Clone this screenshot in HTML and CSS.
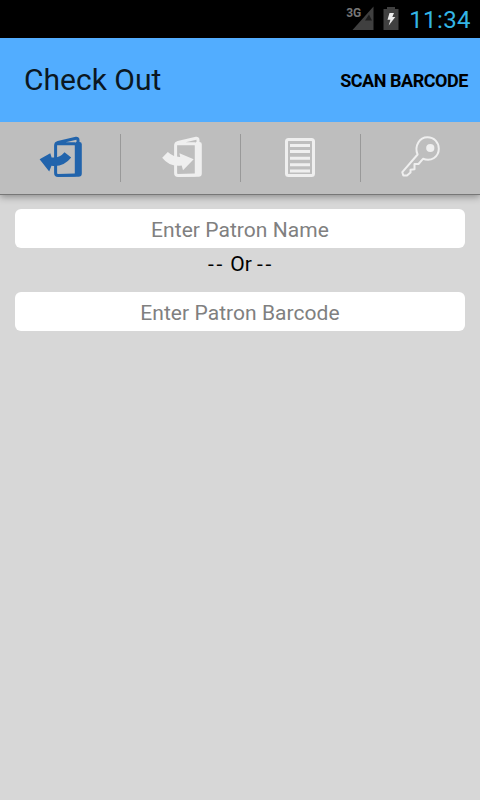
FILE: index.html
```html
<!DOCTYPE html>
<html lang="en">
<head>
    <meta charset="UTF-8">
    <meta name="viewport" content="width=device-width, initial-scale=1.0">
    <title>Check Out</title>
    <link rel="stylesheet" href="styles.css">
</head>
<body>
    <div class="status-bar">
        <span class="network">3G</span>
        <svg class="signal" width="22" height="24" viewBox="0 0 22 24">
            <path d="M0.5 24L21.5 0.5V24Z" fill="#404040"/>
            <path d="M13 14.5L17 8.5L20 14.5Z" fill="#1c1c1c"/>
        </svg>
        <svg class="battery" width="16" height="24" viewBox="0 0 16 24">
            <path d="M4 1H12V3H15.5V24H0.5V3H4Z" fill="#404040"/>
            <path d="M6.5 7H11L9.3 11H12.3L5.7 19.5L7.4 13.7H4.5Z" fill="#ececec"/>
        </svg>
        <span class="clock">11:34</span>
    </div>
    <header>
        <h1>Check Out</h1>
        <button class="scan">SCAN BARCODE</button>
    </header>
    <nav>
        <a class="tab active" href="#" aria-label="Check out">
            <svg width="48" height="48" viewBox="0 0 48 48">
                <path class="line" d="M20.5 9.8H38.5Q40.3 9.8 40.3 11.6V39.2Q40.3 41 38.5 41L22 41.4Q19.6 41.4 19.6 39V11.5Q19.6 9.2 22 8.5L40 4.2Q42 4 42 6V9"/>
                <path class="fill" d="M40 8H43.5Q45.8 8 45.8 10.3V39.5Q45.8 42.7 42.5 42.7H22L24 40.5H40Z"/>
                <path class="fill" d="M3.6 25.2L14.3 19.2L15.6 23.4Q23.2 24.6 28.5 18.2L35.2 23.4Q27.5 33.2 15.5 31.7L13.2 37.5Z"/>
            </svg>
        </a>
        <a class="tab" href="#" aria-label="Check in">
            <svg width="48" height="48" viewBox="0 0 48 48">
                <path class="line" d="M20.5 9.8H38.5Q40.3 9.8 40.3 11.6V39.2Q40.3 41 38.5 41L22 41.4Q19.6 41.4 19.6 39V11.5Q19.6 9.2 22 8.5L40 4.2Q42 4 42 6V9"/>
                <path class="fill" d="M40 8H43.5Q45.8 8 45.8 10.3V39.5Q45.8 42.7 42.5 42.7H22L24 40.5H40Z"/>
                <path class="fill" d="M6.2 23.7L11.8 18.1Q17.5 23.2 24.2 23L23.4 19.3L37.7 25.3L27 36.2L25.7 31.5Q13.5 33.2 6.2 23.7Z"/>
            </svg>
        </a>
        <a class="tab" href="#" aria-label="List">
            <svg width="48" height="48" viewBox="0 0 48 48">
                <rect class="line" x="10.5" y="5.5" width="27" height="36" rx="2"/>
                <path class="rows" d="M14 11.5H34M14 17.5H34M14 24.3H34M14 30.7H34M14 37H34"/>
            </svg>
        </a>
        <a class="tab" href="#" aria-label="Key">
            <svg width="48" height="48" viewBox="0 0 48 48">
                <path class="key" d="M21.6 20.5C18 12 23.5 3.2 31.5 3.2C38.2 3.2 42.8 8.4 42.8 14.8C42.8 22.5 35.4 28.2 27 24.8L22.5 30H18.5V35.2L14.5 35.7V38.5L11 41.5H7.3L6.3 38.2Z"/>
                <circle class="fill" cx="34.3" cy="14" r="4.1"/>
            </svg>
        </a>
    </nav>
    <main>
        <input type="text" placeholder="Enter Patron Name">
        <p><span class="dash">--</span> Or <span class="dash">--</span></p>
        <input type="text" placeholder="Enter Patron Barcode">
    </main>
</body>
</html>
```
FILE: styles.css
```css
* {
    box-sizing: border-box;
}

body {
    margin: 0;
    height: 100vh;
    overflow: hidden;
    display: flex;
    flex-direction: column;
    font-family: Roboto, sans-serif;
    background-color: #d7d7d7;
}

.status-bar {
    height: 38px;
    background-color: #000;
    display: flex;
    justify-content: flex-end;
    align-items: flex-start;
    padding: 6px 9px 0 0;
}

.network {
    color: #777;
    font-size: 12px;
    font-weight: bold;
    line-height: 14px;
    margin-right: -9px;
}

.battery {
    margin: 0 10px 0 9px;
}

.clock {
    color: #33b5e5;
    font-size: 24px;
    line-height: 28px;
    letter-spacing: 0.4px;
}

header {
    height: 84px;
    background-color: #52adff;
    display: flex;
    justify-content: space-between;
    align-items: center;
    padding: 0 12px 0 24px;
}

h1 {
    margin: 0;
    padding-bottom: 2px;
    font-size: 30px;
    font-weight: normal;
    color: #0b1722;
}

.scan {
    border: none;
    padding: 0;
    background: none;
    color: #000;
    font-family: inherit;
    font-size: 18px;
    font-weight: bold;
    letter-spacing: -0.45px;
}

nav {
    height: 73px;
    flex-shrink: 0;
    display: flex;
    align-items: center;
    background-color: #bebebe;
    border-bottom: 1px solid #777;
    box-shadow: 0 2px 7px rgba(0, 0, 0, 0.35);
    clip-path: inset(0 0 -12px 0);
}

.tab {
    flex: 1;
    height: 48px;
    display: flex;
    justify-content: center;
    color: #efefef;
}

.tab + .tab {
    box-shadow: inset 1px 0 #999;
}

.tab.active {
    color: #2264ac;
}

.line {
    fill: none;
    stroke: currentColor;
    stroke-width: 3;
}

.rows {
    stroke: currentColor;
    stroke-width: 3;
}

.key {
    fill: none;
    stroke: currentColor;
    stroke-width: 2;
    stroke-linejoin: round;
}

.fill {
    fill: currentColor;
}

main {
    padding: 14px 15px;
}

input {
    display: block;
    width: 100%;
    height: 39px;
    border: none;
    border-radius: 6px;
    padding: 3px 0 0;
    background-color: #fff;
    font-family: inherit;
    font-size: 21px;
    text-align: center;
    letter-spacing: 0.05px;
}

input::placeholder {
    color: #808080;
}

p {
    margin: 0;
    height: 44px;
    padding: 2px 0 0 2px;
    font-size: 21px;
    line-height: 28px;
    text-align: center;
    color: #000;
}

.dash {
    letter-spacing: 2.7px;
}
```
